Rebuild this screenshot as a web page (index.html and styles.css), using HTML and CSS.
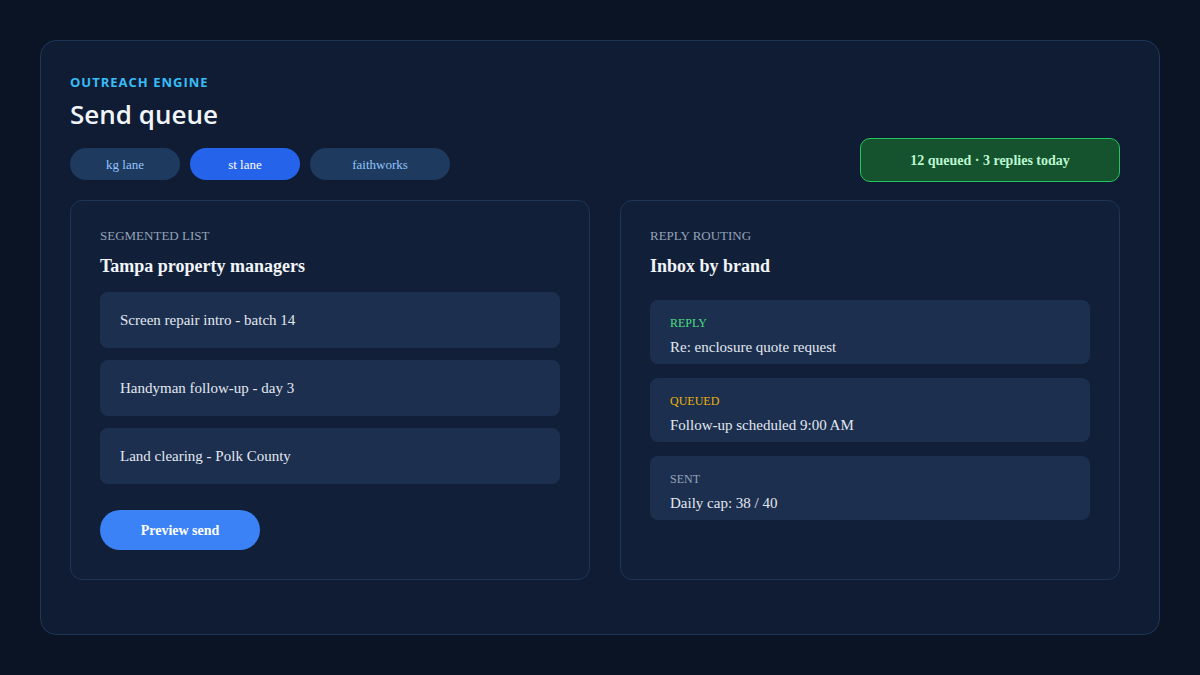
FILE: index.html
```
<!DOCTYPE html>
<html lang="en">

<head>
    <meta charset="UTF-8">
    <meta name="viewport" content="width=device-width, initial-scale=1.0">
    <title>Send queue</title>
    <link rel="stylesheet" href="styles.css">
</head>

<body>
    <div class="shell">

        <div class="header">
            <div class="headerLeft">
                <div class="eyebrow">OUTREACH ENGINE</div>
                <div class="title">Send queue</div>
                <div class="lanes">
                    <div class="lane">kg lane</div>
                    <div class="lane active">st lane</div>
                    <div class="lane wide">faithworks</div>
                </div>
            </div>
            <div class="status">12 queued · 3 replies today</div>
        </div>

        <div class="panels">
            <div class="panel">
                <div class="panelLabel">SEGMENTED LIST</div>
                <div class="panelTitle">Tampa property managers</div>
                <div class="list">
                    <div class="listItem">Screen repair intro - batch 14</div>
                    <div class="listItem">Handyman follow-up - day 3</div>
                    <div class="listItem">Land clearing - Polk County</div>
                </div>
                <div class="btnPreview">Preview send</div>
            </div>

            <div class="panel">
                <div class="panelLabel">REPLY ROUTING</div>
                <div class="panelTitle">Inbox by brand</div>
                <div class="inbox">
                    <div class="inboxItem">
                        <div class="tag reply">REPLY</div>
                        <div class="inboxText">Re: enclosure quote request</div>
                    </div>
                    <div class="inboxItem">
                        <div class="tag queued">QUEUED</div>
                        <div class="inboxText">Follow-up scheduled 9:00 AM</div>
                    </div>
                    <div class="inboxItem">
                        <div class="tag sent">SENT</div>
                        <div class="inboxText">Daily cap: 38 / 40</div>
                    </div>
                </div>
            </div>
        </div>

    </div>
</body>

</html>
```

FILE: styles.css
```
body {
    margin: 0;
    background: #0a1424;
    font-family: "Liberation Serif", "Times New Roman", serif;
    color: #e2e8f0;
}

.shell {
    margin: 40px;
    height: 595px;
    box-sizing: border-box;
    padding: 32px 39px 0 29px;
    background: #0f1c33;
    border: 1px solid #1f3557;
    border-radius: 16px;
}

.header {
    display: flex;
    justify-content: space-between;
    align-items: flex-end;
}

.eyebrow {
    font-family: "Open Sans", sans-serif;
    font-size: 13px;
    line-height: 18px;
    font-weight: 700;
    letter-spacing: 1px;
    color: #38bdf8;
}

.title {
    font-family: "Open Sans", sans-serif;
    font-size: 26px;
    line-height: 36px;
    font-weight: 600;
    margin-top: 5px;
    color: #f1f5f9;
}

.lanes {
    display: flex;
    gap: 10px;
    margin-top: 16px;
    margin-bottom: 2px;
}

.lane {
    width: 110px;
    height: 32px;
    box-sizing: border-box;
    padding-top: 2px;
    border-radius: 16px;
    background: #1e3a5f;
    color: #93c5fd;
    font-size: 13px;
    display: flex;
    align-items: center;
    justify-content: center;
}

.lane.wide {
    width: 140px;
}

.lane.active {
    background: #2563eb;
    color: #ffffff;
}

.status {
    width: 260px;
    height: 44px;
    box-sizing: border-box;
    padding-top: 2px;
    border: 1px solid #22c55e;
    border-radius: 10px;
    background: #14532d;
    color: #bbf7d0;
    font-size: 14px;
    font-weight: 700;
    display: flex;
    align-items: center;
    justify-content: center;
}

.panels {
    display: grid;
    grid-template-columns: 520px 500px;
    gap: 30px;
    margin-top: 18px;
}

.panel {
    height: 380px;
    box-sizing: border-box;
    padding: 27px 29px 0 29px;
    border: 1px solid #1f3557;
    border-radius: 12px;
    background: #111f38;
}

.panelLabel {
    font-size: 13px;
    line-height: 16px;
    color: #94a3b8;
}

.panelTitle {
    font-size: 18px;
    line-height: 22px;
    font-weight: 700;
    margin-top: 11px;
    color: #f1f5f9;
}

.list {
    display: flex;
    flex-direction: column;
    gap: 12px;
    margin-top: 15px;
}

.listItem {
    height: 56px;
    padding: 0 20px;
    display: flex;
    align-items: center;
    background: #1c2f4f;
    border-radius: 8px;
    font-size: 15px;
    color: #e2e8f0;
}

.btnPreview {
    width: 160px;
    height: 40px;
    box-sizing: border-box;
    padding-top: 1px;
    margin-top: 26px;
    border-radius: 20px;
    background: #3b82f6;
    color: #ffffff;
    font-size: 14px;
    font-weight: 700;
    display: flex;
    align-items: center;
    justify-content: center;
}

.inbox {
    display: flex;
    flex-direction: column;
    gap: 14px;
    margin-top: 23px;
}

.inboxItem {
    height: 64px;
    box-sizing: border-box;
    padding: 15px 20px 8px;
    background: #1c2f4f;
    border-radius: 8px;
}

.tag {
    font-size: 12px;
    line-height: 16px;
    margin-bottom: 7px;
}

.reply {
    color: #4ade80;
}

.queued {
    color: #eab308;
}

.sent {
    color: #94a3b8;
}

.inboxText {
    font-size: 15px;
    line-height: 18px;
    color: #e2e8f0;
}
```
